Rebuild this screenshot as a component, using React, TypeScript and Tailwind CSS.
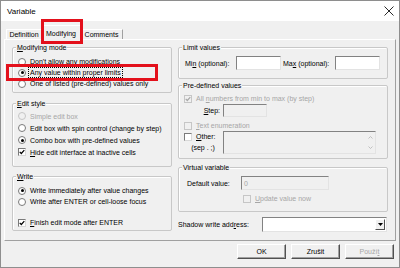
import React from 'react';

type Kids = { children?: React.ReactNode };

const U = ({ children }: Kids) => <span className="underline underline-offset-[1px]">{children}</span>;

const Radio = ({ checked, disabled }: { checked?: boolean; disabled?: boolean }) => (
  <span
    className={`w-[8px] h-[8px] rounded-full border shrink-0 flex items-center justify-center ${
      disabled ? 'border-[#c6c6c6] bg-[#f0f0f0]' : 'border-[#7a7a7a] bg-white'
    }`}
  >
    {checked && <span className="w-[3px] h-[3px] rounded-full bg-black" />}
  </span>
);

const Check = ({ checked, disabled }: { checked?: boolean; disabled?: boolean }) => (
  <span
    className={`w-[8px] h-[8px] border shrink-0 flex items-center justify-center ${
      disabled
        ? 'border-[#c6c6c6] bg-[#f0f0f0]'
        : 'border-t-[#7a7a7a] border-l-[#7a7a7a] border-r-[#d8d8d8] border-b-[#d8d8d8] bg-white'
    }`}
  >
    {checked && (
      <svg width="6" height="6" viewBox="0 0 6 6">
        <path d="M0.7 2.9 L2.3 4.5 L5.3 1.1" fill="none" stroke={disabled ? '#a8a8a8' : '#000'} strokeWidth="1.2" />
      </svg>
    )}
  </span>
);

const Group = ({ title, className = '', children }: Kids & { title: React.ReactNode; className?: string }) => (
  <div className={`border border-[#c8c8c8] rounded-[2px] shadow-[inset_1px_1px_0_#ffffff] flex flex-col shrink-0 ${className}`}>
    <div className="-mt-[5px] ml-[3px] px-[1px] bg-[#f0f0f0] w-fit h-[9px] leading-[9px]">{title}</div>
    {children}
  </div>
);

const Field = ({ className = '', disabled, children }: Kids & { className?: string; disabled?: boolean }) => (
  <div
    className={`border border-t-[#828282] border-l-[#828282] border-r-[#e3e3e3] border-b-[#e3e3e3] shrink-0 ${
      disabled ? 'bg-[#f0f0f0]' : 'bg-white'
    } ${className}`}
  >
    {children}
  </div>
);

const Btn = ({ children, disabled }: Kids & { disabled?: boolean }) => (
  <div
    className={`w-[49px] h-[15px] flex items-center justify-center border border-t-white border-l-white border-r-[#505050] border-b-[#505050] shadow-[inset_-1px_-1px_0_#a0a0a0] ${
      disabled ? 'text-[#a6a6a6]' : 'text-black'
    }`}
  >
    {children}
  </div>
);

export default function App() {
  return (
    <div className="relative w-[400px] h-[268px] border border-[#8e8e8e] bg-[#f0f0f0] text-[7px] leading-[11px] text-black font-['Liberation_Sans',Arial,sans-serif] overflow-hidden flex flex-col">
      {/* title bar */}
      <div className="h-[20px] bg-white flex items-center justify-between pl-[6px] pr-[4px] shrink-0">
        <span className="text-[8px]">Variable</span>
        <svg width="10" height="10" viewBox="0 0 10 10" className="mr-[1px]">
          <path d="M0.5 0.5 L9.5 9.5 M9.5 0.5 L0.5 9.5" stroke="#111" strokeWidth="0.9" />
        </svg>
      </div>

      <div className="flex flex-col px-[3px] pt-[4px]">
        {/* tabs */}
        <div className="flex items-end h-[15px] pl-[2px]">
          <div className="w-[35px] h-[10px] mb-[1px] flex items-center justify-center border-t border-l border-t-white border-l-white">
            Definition
          </div>
          <div className="relative z-10 w-[40px] h-[15px] flex items-start pt-[2px] justify-center bg-[#f0f0f0] border-t border-l border-r border-t-white border-l-white border-r-[#a0a0a0]">
            Modifying
          </div>
          <div className="w-[42px] h-[10px] mb-[1px] flex items-center justify-center border-t border-r border-t-white border-r-[#a0a0a0]">
            Comments
          </div>
        </div>

        {/* panel */}
        <div className="-mt-[1px] h-[202px] w-[392px] border border-t-white border-l-white border-r-[#a0a0a0] border-b-[#a0a0a0] flex gap-[6px] pl-[7px] pt-[7px]">
          {/* left column */}
          <div className="w-[160px] flex flex-col">
            <Group title={<><U>M</U>odifying mode</>} className="h-[46px]">
              <div className="flex flex-col pl-[5px] pt-[4px]">
                <div className="h-[11px] flex items-center gap-[3px]">
                  <Radio />
                  <span className="px-[1px]">Don't allow any modifications</span>
                </div>
                <div className="h-[11px] flex items-center gap-[2px]">
                  <Radio checked />
                  <span className="border border-dotted border-black px-[1px] leading-[9px]">Any value within proper limits</span>
                </div>
                <div className="h-[11px] flex items-center gap-[3px]">
                  <Radio />
                  <span className="px-[1px]">One of listed (pre-defined) values only</span>
                </div>
              </div>
            </Group>

            <Group title={<><U>E</U>dit style</>} className="h-[64px] mt-[10px]">
              <div className="flex flex-col pl-[5px] pt-[2px]">
                <div className="h-[12px] flex items-center gap-[3px] text-[#a6a6a6]">
                  <Radio disabled />
                  <span className="px-[1px]">Simple edit box</span>
                </div>
                <div className="h-[12px] flex items-center gap-[3px]">
                  <Radio />
                  <span className="px-[1px]">Edit box with spin control (change by step)</span>
                </div>
                <div className="h-[12px] flex items-center gap-[3px]">
                  <Radio checked />
                  <span className="px-[1px]">Combo box with pre-defined values</span>
                </div>
                <div className="h-[12px] flex items-center gap-[3px]">
                  <Check checked />
                  <span className="px-[1px]">
                    <U>H</U>ide edit interface at inactive cells
                  </span>
                </div>
              </div>
            </Group>

            <Group title={<><U>W</U>rite</>} className="h-[55px] mt-[9px]">
              <div className="flex flex-col pl-[5px] pt-[4px]">
                <div className="h-[11px] flex items-center gap-[3px]">
                  <Radio checked />
                  <span className="px-[1px]">Write immediately after value changes</span>
                </div>
                <div className="h-[11px] flex items-center gap-[3px]">
                  <Radio />
                  <span className="px-[1px]">Write after ENTER or cell-loose focus</span>
                </div>
                <div className="h-[11px] mt-[10px] flex items-center gap-[3px]">
                  <Check checked />
                  <span className="px-[1px]">
                    <U>F</U>inish edit mode after ENTER
                  </span>
                </div>
              </div>
            </Group>
          </div>

          {/* right column */}
          <div className="w-[210px] flex flex-col">
            <Group title="Limit values" className="h-[32px]">
              <div className="flex items-center h-[14px] mt-[4px] pl-[6px]">
                <span className="w-[51px]">
                  Mi<U>n</U> (optional):
                </span>
                <Field className="w-[45px] h-[14px]" />
                <span className="ml-[2px] w-[52px]">
                  Ma<U>x</U> (optional):
                </span>
                <Field className="w-[45px] h-[14px]" />
              </div>
            </Group>

            <Group title="Pre-defined values" className="h-[74px] mt-[6px]">
              <div className="flex flex-col pl-[5px]">
                <div className="h-[11px] mt-[3px] flex items-center gap-[4px] text-[#a6a6a6]">
                  <Check checked disabled />
                  <span>
                    All <U>n</U>umbers from min to max (by step)
                  </span>
                </div>
                <div className="h-[13px] flex items-center gap-[3px]">
                  <span className="w-[36px] text-right">
                    <U>S</U>tep:
                  </span>
                  <Field disabled className="w-[44px] h-[13px]" />
                </div>
                <div className="h-[11px] mt-[3px] flex items-center gap-[4px] text-[#a6a6a6]">
                  <Check disabled />
                  <span>
                    <U>T</U>ext enumeration
                  </span>
                </div>
                <div className="flex gap-[3px] h-[23px]">
                  <div className="w-[36px] flex flex-col">
                    <div className="h-[11px] flex items-center gap-[4px]">
                      <Check />
                      <span>
                        <U>O</U>ther:
                      </span>
                    </div>
                    <div className="h-[11px] flex items-center justify-center pl-[2px]">(sep . ;)</div>
                  </div>
                  <Field disabled className="w-[153px] h-[23px] flex justify-end pr-[1px]">
                    <div className="w-[8px] flex flex-col items-center justify-between py-[4px]">
                      <svg width="5" height="3" viewBox="0 0 5 3">
                        <path d="M0.5 2.5 L2.5 0.5 L4.5 2.5" fill="none" stroke="#b4b4b4" strokeWidth="0.8" />
                      </svg>
                      <svg width="5" height="3" viewBox="0 0 5 3">
                        <path d="M0.5 0.5 L2.5 2.5 L4.5 0.5" fill="none" stroke="#b4b4b4" strokeWidth="0.8" />
                      </svg>
                    </div>
                  </Field>
                </div>
              </div>
            </Group>

            <Group title="Virtual variable" className="h-[45px] mt-[8px]">
              <div className="flex flex-col pl-[8px]">
                <div className="h-[14px] mt-[4px] flex items-center">
                  <span className="w-[54px]">Default value:</span>
                  <Field disabled className="w-[88px] h-[14px] pl-[2px] flex items-center text-[#a6a6a6]">
                    0
                  </Field>
                </div>
                <div className="h-[11px] mt-[3px] ml-[56px] flex items-center gap-[4px] text-[#a6a6a6]">
                  <Check disabled />
                  <span>
                    <U>U</U>pdate value now
                  </span>
                </div>
              </div>
            </Group>

            <div className="h-[15px] mt-[5px] flex items-center">
              <span className="w-[84px]">
                Shadow write add<U>r</U>ess:
              </span>
              <Field className="w-[125px] h-[15px] flex items-center justify-end pr-[1px]">
                <div className="w-[10px] h-[11px] flex items-center justify-center bg-[#f0f0f0] border border-t-white border-l-white border-r-[#505050] border-b-[#505050]">
                  <svg width="5" height="3" viewBox="0 0 5 3">
                    <path d="M0 0 L5 0 L2.5 3 Z" fill="#000" />
                  </svg>
                </div>
              </Field>
            </div>
          </div>
        </div>

        {/* buttons */}
        <div className="flex justify-end gap-[5px] mt-[3px] pr-[2px]">
          <Btn>OK</Btn>
          <Btn>Zrušit</Btn>
          <Btn disabled>
            Použí<U>t</U>
          </Btn>
        </div>
      </div>

      {/* red highlight boxes */}
      <div className="absolute z-20 left-[40px] top-[18px] w-[42px] h-[25px] border-[3px] border-[#e3101b]" />
      <div className="absolute z-20 left-[5px] top-[63px] w-[152px] h-[17px] border-[3px] border-[#e3101b]" />
    </div>
  );
}
